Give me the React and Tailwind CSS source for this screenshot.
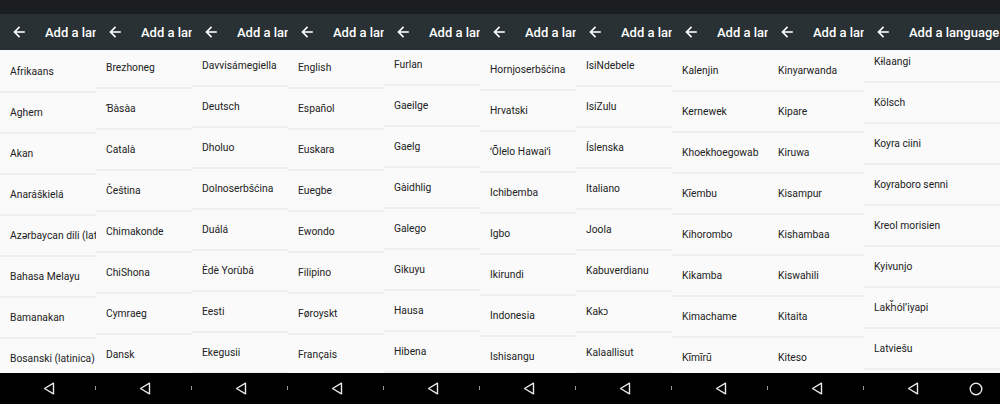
import React from "react";

const cols = [
  { w: "w-[96px]", mt: "mt-[2px]", items: ["Afrikaans", "Aghem", "Akan", "Anaráškielá", "Azərbaycan dili (latın)", "Bahasa Melayu", "Bamanakan", "Bosanski (latinica)", "Català"] },
  { w: "w-[96px]", mt: "-mt-[2px]", items: ["Brezhoneg", "Ɓàsàa", "Català", "Čeština", "Chimakonde", "ChiShona", "Cymraeg", "Dansk", "Davvisámegiella"] },
  { w: "w-[96px]", mt: "-mt-[4px]", items: ["Davvisámegiella", "Deutsch", "Dholuo", "Dolnoserbšćina", "Duálá", "Èdè Yorùbá", "Eesti", "Ekegusii", "Ελληνικά"] },
  { w: "w-[96px]", mt: "-mt-[2px]", items: ["English", "Español", "Euskara", "Euegbe", "Ewondo", "Filipino", "Føroyskt", "Français", "Furlan"] },
  { w: "w-[96px]", mt: "-mt-[5px]", items: ["Furlan", "Gaeilge", "Gaelg", "Gàidhlig", "Galego", "Gikuyu", "Hausa", "Hibena", "Hornjoserbšćina"] },
  { w: "w-[96px]", mt: "mt-[0px]", items: ["Hornjoserbšćina", "Hrvatski", "ʻŌlelo Hawaiʻi", "Ichibemba", "Igbo", "Ikirundi", "Indonesia", "Ishisangu", "IsiNdebele"] },
  { w: "w-[96px]", mt: "-mt-[4px]", items: ["IsiNdebele", "IsiZulu", "Íslenska", "Italiano", "Joola", "Kabuverdianu", "Kakɔ", "Kalaallisut", "Kalenjin"] },
  { w: "w-[96px]", mt: "mt-[1px]", items: ["Kalenjin", "Kernewek", "Khoekhoegowab", "Kĩembu", "Kihorombo", "Kikamba", "Kimachame", "Kĩmĩrũ", "Kinyarwanda"] },
  { w: "w-[96px]", mt: "mt-[1px]", items: ["Kinyarwanda", "Kipare", "Kiruwa", "Kisampur", "Kishambaa", "Kiswahili", "Kitaita", "Kiteso", "Kɨlaangi"] },
  { w: "w-[136px]", mt: "-mt-[8px]", items: ["Kɨlaangi", "Kölsch", "Koyra ciini", "Koyraboro senni", "Kreol morisien", "Kyivunjo", "Lakȟólʼiyapi", "Latviešu", "Lietuvių"], last: true },
];

function Arrow() {
  return (
    <svg className="shrink-0" width="12" height="12" viewBox="0 0 12 12" fill="none" stroke="white" strokeWidth="1.6" strokeLinecap="square">
      <path d="M11 6H1.8" />
      <path d="M6 1.5L1.5 6L6 10.5" />
    </svg>
  );
}

function Back() {
  return (
    <svg className="shrink-0" width="12" height="13" viewBox="0 0 12 13" fill="none" stroke="#e8e8e8" strokeWidth="1.4" strokeLinejoin="round">
      <path d="M10.5 1.2L1.5 6.5L10.5 11.8Z" />
    </svg>
  );
}

function Home() {
  return (
    <svg className="shrink-0" width="14" height="14" viewBox="0 0 14 14" fill="none" stroke="#e8e8e8" strokeWidth="1.4">
      <circle cx="7" cy="7" r="5.8" />
    </svg>
  );
}

function Column({ c }) {
  return (
    <div className={`${c.w} shrink-0 h-[404px] flex flex-col overflow-hidden`}>
      <div className="h-[14px] bg-[#1b1e20] shrink-0" />
      <div className="h-[36px] bg-[#2a3134] shrink-0 flex items-center pl-[13px] whitespace-nowrap overflow-hidden">
        <Arrow />
        <span className="shrink-0 ml-[20px] text-white text-[13px] font-medium leading-none">Add a language</span>
      </div>
      <div className="flex-1 overflow-hidden bg-[#fafafa] relative">
        <div className={`${c.mt} flex flex-col`}>
          {c.items.map((t, i) => (
            <div key={i} className="h-[41px] shrink-0 flex items-center pl-[10px] border-b-2 border-[#efefef] whitespace-nowrap text-[10.3px] text-[#222] bg-[#fafafa]">
              {t}
            </div>
          ))}
        </div>
      </div>
      <div className="h-[31px] bg-black shrink-0 flex items-center relative">
        <div className="w-[96px] shrink-0 flex justify-center pl-[1px]">
          <Back />
        </div>
        {c.last ? (
          <div className="flex-1 flex justify-center pr-[9px]">
            <Home />
          </div>
        ) : (
          <div className="absolute right-[0px] top-[13px] w-[1px] h-[4px] bg-[#9a9a9a]" />
        )}
      </div>
    </div>
  );
}

export default function App() {
  return (
    <div className="w-[1000px] h-[404px] flex overflow-hidden" style={{ fontFamily: "Roboto, 'Noto Sans', sans-serif" }}>
      {cols.map((c, i) => (
        <Column key={i} c={c} />
      ))}
    </div>
  );
}
